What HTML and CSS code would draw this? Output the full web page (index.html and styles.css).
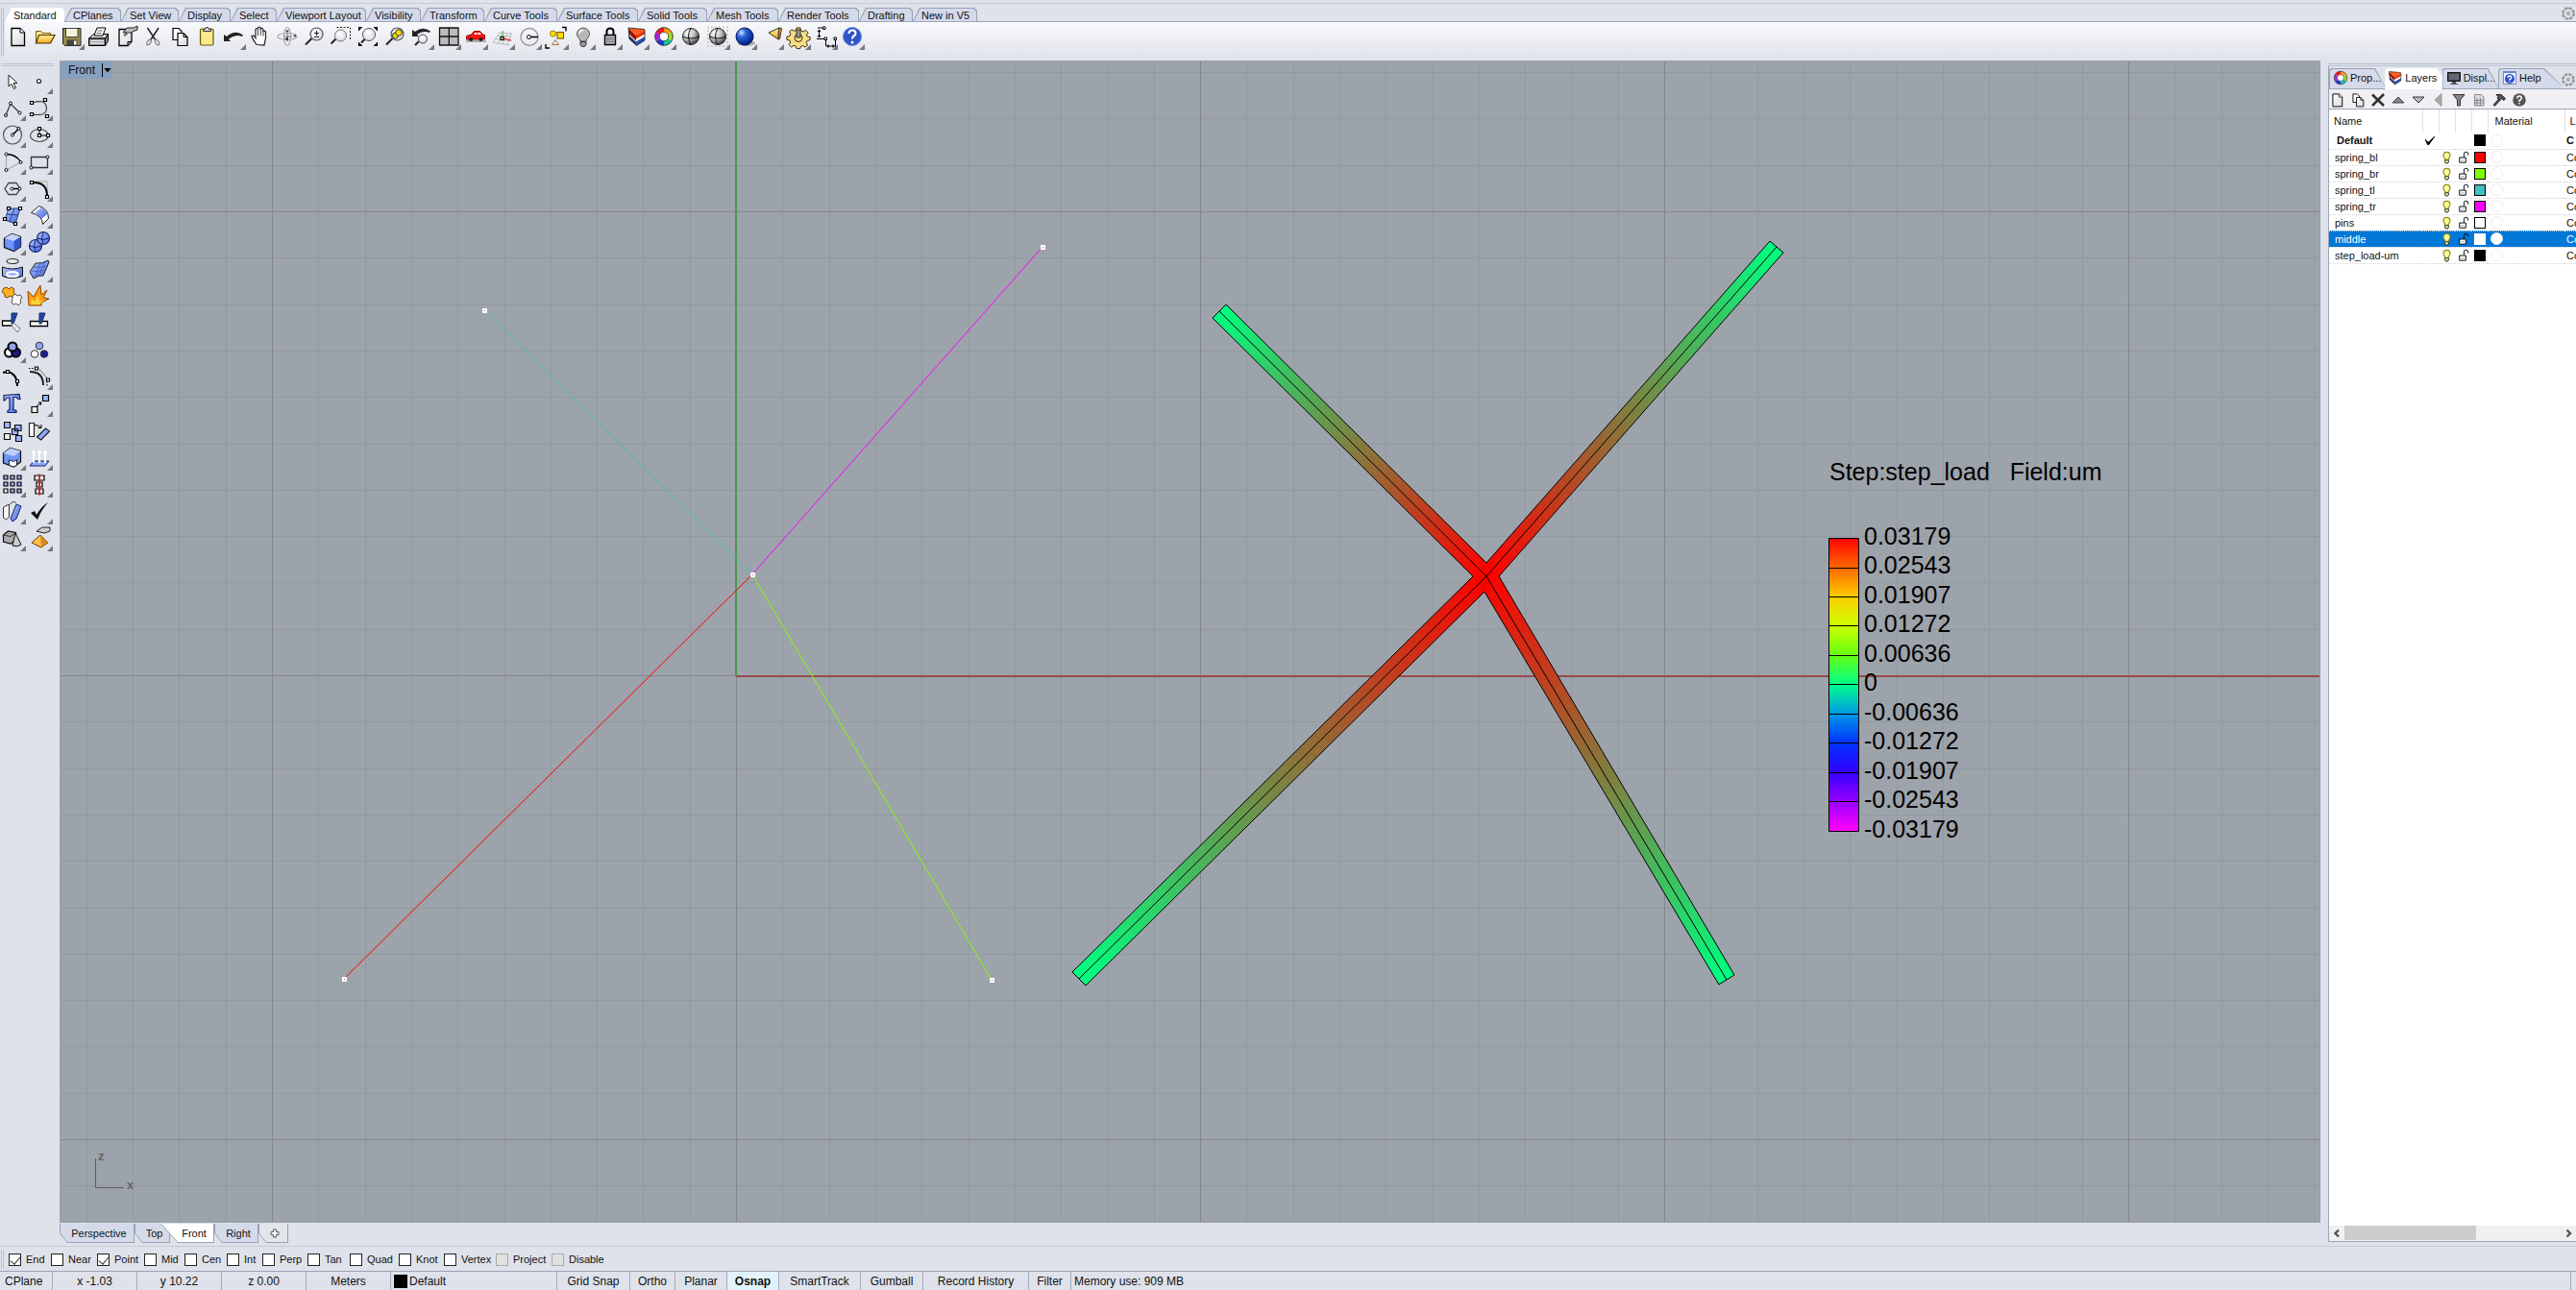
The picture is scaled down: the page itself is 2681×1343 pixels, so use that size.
FILE: index.html
```html
<!DOCTYPE html>
<html lang="en">
<head>
<meta charset="utf-8">
<title>Front viewport</title>
<link rel="stylesheet" href="styles.css">
</head>
<body>
<svg class="defs" aria-hidden="true">
  <defs>
    <linearGradient id="paper" x1="0" y1="0" x2="1" y2="1"><stop offset="0" stop-color="#fff"/><stop offset="1" stop-color="#d8d8d8"/></linearGradient>
    <linearGradient id="blue" x1="0" y1="0" x2="1" y2="1"><stop offset="0" stop-color="#b4c8ff"/><stop offset="1" stop-color="#3f62dd"/></linearGradient>
    <linearGradient id="gold" x1="0" y1="0" x2="0" y2="1"><stop offset="0" stop-color="#fff1a0"/><stop offset="1" stop-color="#f4a91c"/></linearGradient>
    <radialGradient id="grayball" cx=".32" cy=".28" r=".75"><stop offset="0" stop-color="#fff"/><stop offset=".5" stop-color="#c4c4c4"/><stop offset="1" stop-color="#444"/></radialGradient>
    <radialGradient id="blueball" cx=".32" cy=".28" r=".75"><stop offset="0" stop-color="#cfe0ff"/><stop offset=".35" stop-color="#2b63d8"/><stop offset="1" stop-color="#001c80"/></radialGradient>
    <radialGradient id="lens" cx=".4" cy=".35" r=".7"><stop offset="0" stop-color="#fff"/><stop offset="1" stop-color="#d5d8de"/></radialGradient>
    <symbol id="i-doc" viewBox="0 0 28 28"><path d="M7 5.500h9l4.500 4.500v13.500H7z" fill="url(#paper)" stroke="#000" stroke-width="1.300"/><path d="M16 5.500V10h4.500" fill="#fff" stroke="#000"/></symbol>
    <symbol id="i-copy" viewBox="0 0 28 28"><path d="M7 5.500h6l3 3v9H7z" fill="#fff" stroke="#000" stroke-width="1.200"/><path d="M12 10.500h6l4 4v9H12z" fill="url(#paper)" stroke="#000" stroke-width="1.200"/><path d="M18 10.500v4h4" fill="none" stroke="#000"/></symbol>
    <symbol id="i-wheel" viewBox="0 0 28 28"><g fill="none" stroke-width="5"><path d="M14 7a7 7 0 0 1 6 3.500" stroke="#f90"/><path d="M20 10.500a7 7 0 0 1 0 7" stroke="#9d2"/><path d="M20 17.500a7 7 0 0 1-6 3.500" stroke="#1c9"/><path d="M14 21a7 7 0 0 1-6-3.500" stroke="#23d"/><path d="M8 17.500a7 7 0 0 1 0-7" stroke="#a2d"/><path d="M8 10.500A7 7 0 0 1 14 7" stroke="#f12"/></g><circle cx="14" cy="14" r="9.300" fill="none" stroke="#444"/><circle cx="14" cy="14" r="4.700" fill="#fff" stroke="#555"/></symbol>
    <symbol id="i-layers" viewBox="0 0 28 28"><path d="M5 5l8 8 .5 10.500L6 16.500z" fill="#8c1a10"/><path d="M5.600 13l7.600 7 .3 3.500L6 16.500z" fill="#17368c"/><path d="M5.300 11l7.800 7.500.2 1.500L5.600 13z" fill="#ddd"/><path d="M13.300 19L22 14v4l-8.500 5.500z" fill="#2450b4"/><path d="M13 16.500l9-5V14l-8.700 5z" fill="#fff"/><path d="M13 12.500l9-5v4l-9 5z" fill="#e8320c"/><path d="M5 5l16.500 1.500.5 1-9 5.500z" fill="#ff5a1c"/><path d="M5 5l16.500 1.500.5 1V18l-8.500 5.500L6 16.500z" fill="none" stroke="#222" stroke-width=".8"/></symbol>
    <symbol id="i-ball" viewBox="0 0 28 28"><circle cx="14" cy="14" r="8.500" fill="url(#grayball)" stroke="#222"/><path d="M5.500 14q8.500 4 17 0M14 5.500q-5 8.500 0 17" fill="none" stroke="#111"/></symbol>
    <symbol id="i-gear" viewBox="0 0 28 28"><path d="M12 5h4l.6 3 2.400 1 2.600-1.600 2.600 2.800L22.500 12l.6 2 3 .6v3l-3 .8-1 2 1.500 2.600-2.600 2-2.500-1.500-2 .8-.8 2.300h-3.600l-.9-2.500-2-.8L6.500 25l-2.400-2.300L5.700 20l-.8-2-3-.7v-3l3-.8 1-2.200L4.400 9 7 6.800l2.600 1.500 1.800-.7z"/><circle cx="14" cy="15.500" r="4" class="hub"/></symbol>
    <symbol id="i-bulb" viewBox="0 0 17 17"><path d="M8.500 2.500a3.700 3.700 0 0 0-3.700 3.700c0 2 1.700 2.700 1.900 4.800h3.600c.2-2.100 1.900-2.800 1.900-4.800a3.700 3.700 0 0 0-3.700-3.700z" fill="#ffff9c" stroke="#8c8c20" stroke-width="1.200"/><path d="M6.500 11.500h4v2.500h-1v1h-2v-1h-1z" fill="#ff9" stroke="#333"/></symbol>
    <symbol id="i-lock" viewBox="0 0 17 17"><path d="M4.500 8.500h7v5.500h-7z" fill="#fff" stroke="#000"/><path d="M9.500 8V4.500q0-2 1.500-2h1.500q1.500 0 1.500 2V6" fill="none" stroke="#000"/><path d="M6 11.500h4" stroke="#aaa"/></symbol>
    <symbol id="i-mag" viewBox="0 0 28 28"><path d="M5 22.500l7-7" stroke="#222" stroke-width="2"/><circle cx="16.500" cy="11.500" r="6.500" fill="url(#lens)" stroke="#555" stroke-width="1.200"/></symbol>
    <symbol id="i-opts" viewBox="0 0 16 16"><circle cx="8" cy="8" r="6" fill="none" stroke="#888" stroke-width="1.600" stroke-dasharray="3 1.700"/><circle cx="8" cy="8" r="5" fill="none" stroke="#999"/><circle cx="8" cy="8" r="1.500" fill="none" stroke="#888"/></symbol>
    <linearGradient id="scale" x1="0" y1="0" x2="0" y2="1"><stop offset="0" stop-color="#f00"/><stop offset=".1" stop-color="#ff6600"/><stop offset=".2" stop-color="#ffcc00"/><stop offset=".3" stop-color="#ccff00"/><stop offset=".4" stop-color="#66ff10"/><stop offset=".5" stop-color="#00ff88"/><stop offset=".6" stop-color="#0099e5"/><stop offset=".7" stop-color="#0033ff"/><stop offset=".8" stop-color="#3300ff"/><stop offset=".9" stop-color="#9900ff"/><stop offset="1" stop-color="#f0f"/></linearGradient>
  </defs>
</svg>

<header class="top">
  <div class="grip-v"></div>
  <div class="top-main">
    <nav class="tabs" aria-label="Toolbar groups">
      <button class="tab active"><span>Standard</span></button><button class="tab"><span>CPlanes</span></button><button class="tab"><span>Set View</span></button><button class="tab"><span>Display</span></button><button class="tab"><span>Select</span></button><button class="tab"><span>Viewport Layout</span></button><button class="tab"><span>Visibility</span></button><button class="tab"><span>Transform</span></button><button class="tab"><span>Curve Tools</span></button><button class="tab"><span>Surface Tools</span></button><button class="tab"><span>Solid Tools</span></button><button class="tab"><span>Mesh Tools</span></button><button class="tab"><span>Render Tools</span></button><button class="tab"><span>Drafting</span></button><button class="tab"><span>New in V5</span></button>
      <button class="opts" aria-label="Toolbar options"><svg viewBox="0 0 16 16"><use href="#i-opts"/></svg></button>
    </nav>
    <div class="toolbar">
      <button class="tool" aria-label="New"><svg viewBox="0 0 28 28"><use href="#i-doc"/></svg></button>
      <button class="tool" aria-label="Open"><svg viewBox="0 0 28 28"><path d="M4.500 20.500V8.500h5l1.500 2h8.500v3" fill="#ffe98a" stroke="#7a5a00"/><path d="M4.500 21l3-8.500h16.500L19.500 21z" fill="url(#gold)" stroke="#4a3500" stroke-width="1.200"/></svg></button>
      <button class="tool more" aria-label="Save"><svg viewBox="0 0 28 28"><path d="M4.500 5.500h18.500v18H6.500l-2-2z" fill="#958d48" stroke="#222"/><path d="M7.500 5.500h12.500v9H7.500z" fill="#f4f2da" stroke="#444"/><path d="M8.500 17.500h11v6h-11z" fill="#444"/><path d="M16 18.500h2.500v4H16z" fill="#fff"/></svg></button>
      <button class="tool" aria-label="Print"><svg viewBox="0 0 28 28"><path d="M3.500 16l5-4.500h15l-3 4.500z" fill="#ddd" stroke="#000"/><path d="M9 13l3-8h9l-3 8z" fill="#fff" stroke="#000"/><path d="M12.500 8h5M11.500 10.500h5" stroke="#666"/><path d="M3.500 16h17v7.500h-17zM20.500 16l3-4.500v7l-3 5z" fill="#888" stroke="#000"/><path d="M5 18.500h14M5 21h14" stroke="#eee" stroke-width="1.300"/></svg></button>
      <button class="tool" aria-label="Properties"><svg viewBox="0 0 28 28"><path d="M7 6.500h13v13l-4 4H7z" fill="url(#paper)" stroke="#000" stroke-width="1.300"/><path d="M16 23.500v-4h4" fill="#999" stroke="#000"/><path d="M11 10l4-5h7l4-2v4l-4 1.500-3 2-2-1-4 4-1-1 3-3z" fill="#bbb" stroke="#222"/></svg></button>
      <button class="tool" aria-label="Cut"><svg viewBox="0 0 28 28"><path d="M8.500 5l8.500 13M20 5l-8.500 13" stroke="#222" stroke-width="1.500"/><ellipse cx="10" cy="20" rx="1.700" ry="3.200" transform="rotate(35 10 20)" fill="none" stroke="#888" stroke-width="1.300"/><ellipse cx="18.500" cy="20" rx="1.700" ry="3.200" transform="rotate(-35 18.500 20)" fill="none" stroke="#888" stroke-width="1.300"/></svg></button>
      <button class="tool" aria-label="Copy"><svg viewBox="0 0 28 28"><use href="#i-copy"/></svg></button>
      <button class="tool" aria-label="Paste"><svg viewBox="0 0 28 28"><rect x="7.500" y="6" width="13.500" height="17" rx="1.500" fill="#fbe78c" stroke="#6b5500" stroke-width="1.200"/><path d="M10.500 8.500V6.500h2l1-2h2l1 2h2v2z" fill="#ddd" stroke="#333"/></svg></button>
      <button class="tool more" aria-label="Undo"><svg viewBox="0 0 28 28"><path d="M4 12v7h7l-2-2.500q7-5.500 14-2.500l1-1.500q-8-6-17 1.500z" fill="#222"/></svg></button>
      <button class="tool" aria-label="Pan"><svg viewBox="0 0 28 28"><path d="M10 22.500q-4-5-5-9 2-1.500 4 2V6.500q1.500-2 2.500 0V5q1.500-2 2.700 0v1q1.600-1.500 2.600.5v2q1.600-1 2.700.7V16l-1.500 7z" fill="#fff" stroke="#222" stroke-width="1.200"/><path d="M11.500 6.500V13M14.300 6v7M17 8v5.500" stroke="#444"/></svg></button>
      <button class="tool" aria-label="Rotate view"><svg viewBox="0 0 28 28"><ellipse cx="14" cy="14" rx="10" ry="3.500" fill="none" stroke="#aaa" stroke-width="1.200"/><ellipse cx="14" cy="14" rx="3.500" ry="9.500" fill="none" stroke="#aaa" stroke-width="1.200"/><path d="M14 10v9M10 14h9" stroke="#777"/><path d="M14 10l-2-2.500h4zM11 16.500l4-2v4zM20 14l2.500-2.500.5 3z" fill="#333"/></svg></button>
      <button class="tool" aria-label="Zoom"><svg viewBox="0 0 28 28"><use href="#i-mag"/><path d="M14 10.500h5M16.500 8v5M14 14.500h5" stroke="#222" stroke-width="1.200"/></svg></button>
      <button class="tool" aria-label="Zoom window"><svg viewBox="0 0 28 28"><path d="M9.500 4.500h14v12.500" fill="none" stroke="#222" stroke-dasharray="2 1.500"/><path d="M3.500 21.500l5-5" stroke="#222" stroke-width="2"/><circle cx="13.500" cy="13" r="6" fill="url(#lens)" stroke="#777"/></svg></button>
      <button class="tool" aria-label="Zoom extents"><svg viewBox="0 0 28 28"><path d="M4 8.500V4h4.500zM19.500 4H24v4.500zM24 19.500V24h-4.500zM8.500 24H4v-4.500z" fill="#000"/><path d="M7 20.500l4-4" stroke="#222" stroke-width="2"/><circle cx="15" cy="12" r="6.500" fill="url(#lens)" stroke="#555"/></svg></button>
      <button class="tool" aria-label="Zoom selected"><svg viewBox="0 0 28 28"><use href="#i-mag"/><circle cx="14.500" cy="13" r="3" fill="#ffdf00" stroke="#333"/><circle cx="18" cy="10" r="3.300" fill="#ffdf00" stroke="#333"/></svg></button>
      <button class="tool more" aria-label="Undo view change"><svg viewBox="0 0 28 28"><path d="M4 7v7h7l-2-2q6-5 13-2l1-1.500Q15 3 7 9z" fill="#222"/><path d="M7 23l4-4" stroke="#222" stroke-width="2"/><circle cx="15" cy="16.500" r="4.500" fill="url(#lens)" stroke="#444"/></svg></button>
      <button class="tool more" aria-label="Four viewports"><svg viewBox="0 0 28 28"><path d="M4.500 5h19.500v18H4.500z" fill="#bbb" stroke="#111" stroke-width="1.300"/><path d="M14.300 5v18M4.500 14h19.500" stroke="#111" stroke-width="1.300"/></svg></button>
      <button class="tool more" aria-label="Named views"><svg viewBox="0 0 28 28"><path d="M4 19h21" stroke="#aaa" stroke-width="2"/><path d="M4.500 17v-3.500l5-1.500 3-3.500h6l3 3.500 2 .5V17z" fill="#f11" stroke="#900"/><path d="M12 12l1.500-2h2v2zM16.500 10h2l1.500 2h-3.500z" fill="#fff"/><circle cx="9" cy="17" r="2" fill="#222"/><circle cx="19.500" cy="17" r="2" fill="#222"/></svg></button>
      <button class="tool more" aria-label="Set CPlane"><svg viewBox="0 0 28 28"><path d="M4 20l7-10M9 21.500l6-11M14 22.500l5-12M19 23l4-12M11 10l13 1M9 13l14.500 1M6.500 16.500l16.500 2M4 20l17 3" stroke="#bbb" fill="none"/><path d="M14 16V8" stroke="#4a4"/><path d="M14 16l9 2" stroke="#d44" stroke-width="1.500"/><rect x="12" y="14.500" width="3" height="3" fill="#fff" stroke="#000" stroke-width="1.200"/></svg></button>
      <button class="tool more" aria-label="Radius"><svg viewBox="0 0 28 28"><circle cx="14" cy="14.500" r="9" fill="none" stroke="#999" stroke-width="1.400"/><path d="M14 14.500h9" stroke="#000" stroke-width="1.500"/><circle cx="13.500" cy="14.500" r="2" fill="#fff" stroke="#000"/></svg></button>
      <button class="tool more" aria-label="Select"><svg viewBox="0 0 28 28"><circle cx="10.500" cy="11" r="3" fill="#ffdf00" stroke="#a70"/><rect x="15" y="9.500" width="6.500" height="6.500" fill="#ffdf00" stroke="#740"/><path d="M13 17.500l-3.500 5h7z" fill="#eee" stroke="#a74"/><path d="M20 4.500h4v4M3 22v4h4" fill="none" stroke="#000" stroke-width="1.400"/></svg></button>
      <button class="tool more" aria-label="Hide"><svg viewBox="0 0 28 28"><path d="M14 5a6.500 6.500 0 0 0-6.500 6.500c0 3 3 4 3.500 7.500h6c.5-3.500 3.500-4.500 3.500-7.500A6.500 6.500 0 0 0 14 5z" fill="#b8b8b8" stroke="#555"/><path d="M10 11q0-3.500 4-3.500" fill="none" stroke="#fff" stroke-width="1.500"/><path d="M11 19.500h6v3l-1.500 2h-3L11 22.500z" fill="#999" stroke="#333"/></svg></button>
      <button class="tool more" aria-label="Lock"><svg viewBox="0 0 28 28"><path d="M10.500 13V9q0-3.500 3.500-3.500T17.500 9v4" fill="none" stroke="#000" stroke-width="2"/><path d="M8.500 12.500h11v10h-11z" fill="#bbb" stroke="#000" stroke-width="1.400"/><path d="M10 15.500h8M10 17.500h8M10 19.500h8" stroke="#777"/></svg></button>
      <button class="tool more" aria-label="Edit layers"><svg viewBox="0 0 28 28"><use href="#i-layers"/></svg></button>
      <button class="tool more" aria-label="Properties"><svg viewBox="0 0 28 28"><use href="#i-wheel"/></svg></button>
      <button class="tool" aria-label="Shade"><svg viewBox="0 0 28 28"><use href="#i-ball"/></svg></button>
      <button class="tool more" aria-label="Ghosted"><svg viewBox="0 0 28 28"><path d="M3 4.500h23M3 8h23M3 12h23M3 16h23M3 20h23M3 24h23" stroke="#ccc" stroke-width="2" stroke-dasharray="2 2"/><use href="#i-ball"/></svg></button>
      <button class="tool more" aria-label="Render"><svg viewBox="0 0 28 28"><ellipse cx="16" cy="21" rx="9" ry="3" fill="#aaa"/><circle cx="14" cy="14" r="9" fill="url(#blueball)" stroke="#00145c"/></svg></button>
      <button class="tool more" aria-label="Spotlight"><svg viewBox="0 0 28 28"><path d="M11 10l11-5-1 12z" fill="url(#gold)" stroke="#333"/><path d="M21.500 5l3 .5-2 11-1.500.5z" fill="#f80" stroke="#333"/></svg></button>
      <button class="tool more" aria-label="Options"><svg viewBox="0 0 28 28" class="gear"><use href="#i-gear"/><path d="M12 7h4v8h-4z" fill="#999" stroke="#333"/></svg></button>
      <button class="tool more" aria-label="Dimensions"><svg viewBox="0 0 28 28"><path d="M6 5h6M7.500 7v8M5 16.500h9.500V24M24.500 17v9M15.500 24h8" fill="none" stroke="#000"/><path d="M5.500 9l2-2.500 2 2.500zM5.500 13l2 2.500 2-2.500zM17.500 22l-2.500 2 2.500 2zM21.500 22l2.500 2-2.500 2z"/><path d="M11.500 4h2.500v2.500h-2.500zM13 15h2.500v2.500H13zM23 15h2.500v2.500H23z" fill="#fff" stroke="#000"/></svg></button>
      <button class="tool more" aria-label="Help"><svg viewBox="0 0 28 28"><circle cx="14" cy="14" r="9.500" fill="#3154c8" stroke="#6d87d8"/><path d="M10.500 11q0-3.500 3.500-3.500t3.500 3q0 2-2 3-1.500 1-1.500 3" fill="none" stroke="#fff" stroke-width="2.200"/><circle cx="14" cy="20" r="1.500" fill="#fff"/></svg></button>
    </div>
  </div>
</header>

<div class="work">
  <aside class="palette">
    <div class="grip-h"></div>
    <div class="palette-grid">
      <button class="tool" aria-label="Pointer"><svg viewBox="0 0 28 28"><path d="M9 8v12l3-2.500 2.500 5 2-1-2.500-5h4z" fill="#fff" stroke="#222"/></svg></button>
      <button class="tool more" aria-label="Point"><svg viewBox="0 0 28 28"><circle cx="12.500" cy="14.500" r="2" fill="#fff" stroke="#222" stroke-width="1.200"/></svg></button>
      <button class="tool more" aria-label="Polyline"><svg viewBox="0 0 28 28"><path d="M6 22l5-12 9 9" fill="none" stroke="#333" stroke-width="1.200"/><g fill="#fff" stroke="#000"><circle cx="6" cy="22" r="1.500"/><circle cx="11" cy="9.500" r="1.500"/><circle cx="20.500" cy="19.500" r="1.500"/></g></svg></button>
      <button class="tool more" aria-label="Curve"><svg viewBox="0 0 28 28"><path d="M6 9q12-4 14 3t-4 9q-5 1-11 0" fill="none" stroke="#444" stroke-width="1.200"/><path d="M3.500 7.500h3v3h-3zM17.500 4.500h3v3h-3zM3.500 19.500h3v3h-3zM19.500 21.500h3v3h-3z" fill="#fff" stroke="#000" stroke-width="1.200"/></svg></button>
      <button class="tool more" aria-label="Circle"><svg viewBox="0 0 28 28"><circle cx="13" cy="14.500" r="9.500" fill="none" stroke="#555" stroke-width="1.200"/><path d="M13 14.500l6-6" stroke="#000" stroke-width="1.500"/><g fill="#fff" stroke="#000"><circle cx="13" cy="14.500" r="1.500"/><circle cx="19.500" cy="8" r="1.500"/></g></svg></button>
      <button class="tool more" aria-label="Ellipse"><svg viewBox="0 0 28 28"><ellipse cx="13" cy="15" rx="9.500" ry="6.500" fill="none" stroke="#555" stroke-width="1.200"/><path d="M13 15V8M13 15h9" stroke="#000"/><path d="M11.500 6.500h3v3h-3zM11.500 13.500h3v3h-3zM20.500 13.500h3v3h-3z" fill="#fff" stroke="#000" stroke-width="1.200"/></svg></button>
      <button class="tool more" aria-label="Arc"><svg viewBox="0 0 28 28"><path d="M6.500 6.500v17l15-9" fill="none" stroke="#aaa" stroke-width="1.200"/><path d="M6.500 6.500q10 0 15 8" fill="none" stroke="#000" stroke-width="1.500"/><g fill="#fff" stroke="#000"><circle cx="6.500" cy="6.500" r="1.500"/><circle cx="6.500" cy="23" r="1.500"/><circle cx="21.500" cy="15" r="1.500"/></g></svg></button>
      <button class="tool more" aria-label="Rectangle"><svg viewBox="0 0 28 28"><path d="M4.500 9.500H21.500V20.500H4.500z" fill="none" stroke="#333" stroke-width="1.300"/><g fill="#fff" stroke="#000"><circle cx="4.500" cy="20.500" r="1.500"/><circle cx="21.500" cy="9.500" r="1.500"/></g></svg></button>
      <button class="tool more" aria-label="Polygon"><svg viewBox="0 0 28 28"><path d="M9 8.500h8l4 6-4 6H9l-4-6z" fill="none" stroke="#444" stroke-width="1.300"/><path d="M13 14.500h7.500" stroke="#000" stroke-width="1.500"/><g fill="#fff" stroke="#000"><circle cx="12.500" cy="14.500" r="1.500"/><circle cx="20.500" cy="14.500" r="1.500"/></g></svg></button>
      <button class="tool more" aria-label="Fillet"><svg viewBox="0 0 28 28"><path d="M5 7h16v15" fill="none" stroke="#aaa"/><path d="M5 8q16-1 16 14" fill="none" stroke="#000" stroke-width="2"/><path d="M3.500 6.500h3v3h-3zM19.500 21.500h3v3h-3z" fill="#fff" stroke="#000" stroke-width="1.200"/></svg></button>
      <button class="tool more" aria-label="Surface from corners"><svg viewBox="0 0 28 28"><path d="M9 7h12l-5 16-11-4z" fill="url(#blue)" stroke="#26408f"/><path d="M15 7l-5 14M7 13l12 1" stroke="#26408f"/><path d="M7.500 5.500h3v3h-3zM19.500 5.500h3v3h-3zM3.500 16.500h3v3h-3zM14.500 21.500h3v3h-3z" fill="#fff" stroke="#000" stroke-width="1.200"/></svg></button>
      <button class="tool more" aria-label="Loft"><svg viewBox="0 0 28 28"><path d="M4.500 11.500l8-7q10 3 10 13l-6 6q0-9-12-12z" fill="#fff" stroke="#222"/><path d="M8 12l7-6q5 3 6 7l-6 5q-2-4-7-6z" fill="url(#blue)"/></svg></button>
      <button class="tool more" aria-label="Box"><svg viewBox="0 0 28 28"><path d="M4.500 10l8-4.500 9 3v10.500l-7 4.500-10-4z" fill="#6f93ff" stroke="#111" stroke-width="1.300"/><path d="M4.500 10l10 3 7-4.500-9-3z" fill="#c4d2ff"/><path d="M14.500 13v10.500l7-4.500V8.500z" fill="#3355c8"/></svg></button>
      <button class="tool more" aria-label="Boolean union"><svg viewBox="0 0 28 28"><g fill="url(#blue)" stroke="#14236b" stroke-width="1.200"><circle cx="9" cy="18" r="6.500"/><circle cx="17" cy="10" r="6.500"/></g><path d="M3 18q6 3 12 0M9 12q-3 6 0 12M11 10q6 3 12 0M17 4q-3 6 0 12" fill="none" stroke="#14236b"/></svg></button>
      <button class="tool more" aria-label="Extrude"><svg viewBox="0 0 28 28"><ellipse cx="13" cy="6" rx="6" ry="2.500" fill="#eee" stroke="#333" stroke-width="1.200"/><path d="M2.500 12q10 4 21 0v9.500q-11 4-21 0z" fill="url(#blue)" stroke="#111"/><ellipse cx="13" cy="19.500" rx="6" ry="2.500" fill="#9eb4ff" stroke="#fff" stroke-width="2"/></svg></button>
      <button class="tool more" aria-label="Surface tools"><svg viewBox="0 0 28 28"><path d="M3 17l6-9q7 1 13-3l1 2-6 14q-5-1-10 3z" fill="url(#blue)" stroke="#222"/><path d="M7 12q7 1 13-1M5.500 16q6 2 13-1M14 8l-5 14M18 7l-5 14" fill="none" stroke="#4862b8"/></svg></button>
      <button class="tool" aria-label="Join"><svg viewBox="0 0 28 28"><path d="M4 6l3-1 2 2 3-2 3 2-1 3 2 3-3 2-3-1-2 2-3-1v-3l-3-2z" fill="#ffb21c" stroke="#7a4a00"/><path d="M13 14l3-2 2 2 3-1 2 3-2 2 1 3-3 3-2-2-3 1-2-2 1-3z" fill="#fff" stroke="#555"/></svg></button>
      <button class="tool" aria-label="Explode"><svg viewBox="0 0 28 28"><path d="M2 24L1 9l6 6 7-12 1 10 6-5-4 8 6 1-8 4v3z" fill="#ff9c12" stroke="#8a4a00"/><path d="M4 23l1-6 3 3 4-7 1 7 5-2-5 5z" fill="#ffd23c"/></svg></button>
      <button class="tool" aria-label="Trim"><svg viewBox="0 0 28 28"><path d="M2.500 12h11v5h-11z" fill="#fff" stroke="#000" stroke-width="1.300"/><path d="M12 4h6l-4 11h-2z" fill="#234aa5" stroke="#122a66"/><path d="M14 14l7 6-3 4-6-7z" fill="#e4e4ea" stroke="#777"/></svg></button>
      <button class="tool" aria-label="Split"><svg viewBox="0 0 28 28"><path d="M3.500 12.500h18v5h-18z" fill="#fff" stroke="#000" stroke-width="1.300"/><path d="M13 4h6l-4 11h-2z" fill="#234aa5" stroke="#122a66"/></svg></button>
      <button class="tool more" aria-label="Group"><svg viewBox="0 0 28 28"><g stroke="#000" stroke-width="2"><circle cx="9.500" cy="17" r="4.500" fill="#fff"/><circle cx="16.500" cy="17" r="4.500" fill="#1c1c8c"/><circle cx="13" cy="11" r="4.500" fill="#96a2e8"/></g></svg></button>
      <button class="tool" aria-label="Ungroup"><svg viewBox="0 0 28 28"><g stroke="#333"><circle cx="8" cy="18.500" r="3.800" fill="#fff"/><circle cx="18" cy="18.500" r="3.800" fill="#1c1c8c"/><circle cx="13" cy="10" r="3.800" fill="#96a2f0"/></g></svg></button>
      <button class="tool" aria-label="Edit points"><svg viewBox="0 0 28 28"><path d="M3 10q7-2 11 2 4 4 4 12" fill="none" stroke="#000" stroke-width="2"/><path d="M6.500 7.500h3v3h-3zM16.500 17.500h3v3h-3z" fill="#fff" stroke="#000" stroke-width="1.200"/></svg></button>
      <button class="tool more" aria-label="Control points"><svg viewBox="0 0 28 28"><path d="M2 5.500h10l9 10v9" fill="none" stroke="#000" stroke-dasharray="1.500 1.500"/><path d="M3 9q14 0 14 14" fill="none" stroke="#222" stroke-width="2"/><path d="M8.500 4h3v3h-3zM20.500 16h3v3h-3z" fill="#fff" stroke="#000" stroke-width="1.200"/></svg></button>
      <button class="tool" aria-label="Text"><svg viewBox="0 0 28 28"><path d="M4 5.500l16-1 1 5h-2l-2-2h-3v13l3 1v2H8v-2l2-1V8H7l-2 3H4z" fill="url(#blue)" stroke="#14236b" stroke-width="1.200"/></svg></button>
      <button class="tool more" aria-label="Move"><svg viewBox="0 0 28 28"><path d="M5 17.500h6v6H5z" fill="#eee" stroke="#000" stroke-width="1.200"/><path d="M16.500 5.500h6v6h-6z" fill="#9cb4ff" stroke="#000" stroke-width="1.200"/><path d="M10 17l5-4m0 0h-3m3 0l-1 3" fill="none" stroke="#000"/></svg></button>
      <button class="tool" aria-label="Copy objects"><svg viewBox="0 0 28 28"><g fill="#9cb4ff" stroke="#111" stroke-width="1.200"><path d="M4.500 5.500h6v6h-6zM15.500 8.500h6.500v6h-6.500zM12.500 12.500h6v6h-6zM16.500 19.500h6v6h-6z"/><path d="M4.500 17.500h6v6h-6z" fill="#eee"/></g></svg></button>
      <button class="tool" aria-label="Rotate"><svg viewBox="0 0 28 28"><path d="M2.500 6.500h5v14h-5z" fill="#fff" stroke="#222" stroke-width="1.200"/><path d="M10.500 21l9-9 4 3-9 9z" fill="#8ca8ff" stroke="#222" stroke-width="1.200"/><path d="M8 8.500q5 0 7 3m0 0V8m0 3.500h-3.500" fill="none" stroke="#000"/></svg></button>
      <button class="tool more" aria-label="Cage edit"><svg viewBox="0 0 28 28"><path d="M3.500 10l7-5.500 11 3v11.500l-7 5-11-4z" fill="#6f93f0" stroke="#111" stroke-width="1.200"/><path d="M3.500 10l11 3 7-5.500-11-3z" fill="#bccdff"/><path d="M9.500 17l5 1.500 3-2V22l-3 2-5-1.500z" fill="#fff" stroke="#222"/></svg></button>
      <button class="tool more" aria-label="Flow"><svg viewBox="0 0 28 28"><path d="M7 18h16l-4 5H3z" fill="#8ca8ff" stroke="#14236b"/><path d="M7 20V9M13 20V9M19 20V9" stroke="#fff" stroke-width="2"/><path d="M4.500 10L7 6l2.500 4zM10.500 10L13 6l2.500 4zM16.500 10L19 6l2.500 4z" fill="#fff"/></svg></button>
      <button class="tool more" aria-label="Array"><svg viewBox="0 0 28 28"><path d="M4 5h4v4H4zM11 5h4v4h-4zM18 5h4v4h-4zM4 12h4v4H4zM11 12h4v4h-4zM18 12h4v4h-4zM11 19h4v4h-4zM18 19h4v4h-4z" fill="#9cb4ff" stroke="#000" stroke-width="1.200"/><path d="M4 19h4v4H4z" fill="#fff" stroke="#000" stroke-width="1.200"/></svg></button>
      <button class="tool more" aria-label="Align"><svg viewBox="0 0 28 28"><path d="M8 5h10v5H8zM10 12h6v5h-6zM9 19h8v5H9z" fill="#eee" stroke="#000" stroke-width="1.200"/><path d="M13 3.500v22" stroke="#c22" stroke-width="1.800"/></svg></button>
      <button class="tool more" aria-label="Check"><svg viewBox="0 0 28 28"><path d="M3.500 10l6-3v13l-3 3-3-2z" fill="#f4f4f4" stroke="#333"/><path d="M11 22l6-15 5 2-5 13-4 3z" fill="url(#blue)" stroke="#14236b"/><path d="M11 7q2-5 6-1" fill="none" stroke="#444"/></svg></button>
      <button class="tool more" aria-label="Analyze"><svg viewBox="0 0 28 28"><path d="M4 16l4-2 2 4Q15 9 22 5q-7 8-11 18z" fill="#111"/></svg></button>
      <button class="tool more" aria-label="Mesh primitives"><svg viewBox="0 0 28 28"><path d="M3.500 11l5-4 8 1.500v8L11 20l-7.500-2z" fill="#aaa" stroke="#111" stroke-width="1.200"/><path d="M3.500 11l7.500 1.500 5.500-4" fill="none" stroke="#333"/><path d="M16 9l6 12q-4 3-9 1z" fill="#ccc" stroke="#111"/></svg></button>
      <button class="tool more" aria-label="Drag"><svg viewBox="0 0 28 28"><path d="M5 19l9-8 8 8-7 5z" fill="#ffc04a" stroke="#6b3c00"/><path d="M14 11l1 13 7-5z" fill="#d8881c"/><path d="M10 7l6-4h8v4l-6 2z" fill="#ccc" stroke="#222"/></svg></button>
    </div>
  </aside>

  <main class="center">
    <section class="viewport">
      <svg class="scene" role="img" aria-label="Spring model and displacement field">
        <defs>
          <pattern id="grid" x="766" y="220" width="483" height="483" patternUnits="userSpaceOnUse">
            <path fill="#9299a0" d="M48 0h1v483h-1zM97 0h1v483h-1zM145 0h1v483h-1zM193 0h1v483h-1zM242 0h1v483h-1zM290 0h1v483h-1zM338 0h1v483h-1zM386 0h1v483h-1zM435 0h1v483h-1zM0 48h483v1H0zM0 97h483v1H0zM0 145h483v1H0zM0 193h483v1H0zM0 242h483v1H0zM0 290h483v1H0zM0 338h483v1H0zM0 386h483v1H0zM0 435h483v1H0z"/>
            <path fill="#83868e" d="M0 0h1v483H0zM0 0h483v1H0z"/>
          </pattern>
          <linearGradient id="tl" gradientUnits="userSpaceOnUse" x1="1269" y1="324" x2="1547" y2="600"><stop stop-color="#00ff80"/><stop offset="1" stop-color="#f00"/></linearGradient>
          <linearGradient id="tr" gradientUnits="userSpaceOnUse" x1="1849" y1="257" x2="1547" y2="600"><stop stop-color="#00ff80"/><stop offset="1" stop-color="#f00"/></linearGradient>
          <linearGradient id="bl" gradientUnits="userSpaceOnUse" x1="1123" y1="1019" x2="1547" y2="600"><stop stop-color="#00ff80"/><stop offset="1" stop-color="#f00"/></linearGradient>
          <linearGradient id="br" gradientUnits="userSpaceOnUse" x1="1797" y1="1020" x2="1547" y2="600"><stop stop-color="#00ff80"/><stop offset="1" stop-color="#f00"/></linearGradient>
        </defs>
        <g transform="translate(-63 -64)">
          <rect x="63" y="64" width="100%" height="100%" fill="url(#grid)"/>
          <rect x="766" y="703" width="100%" height="2" fill="#964b4b"/>
          <rect x="765" y="64" width="2" height="640" fill="#4b964b"/>
          <g fill="none">
            <path d="M504 323L783 598" stroke="#40c0c0"/>
            <path d="M1085 257L783 598" stroke="#f0f"/>
            <path d="M358 1019L783 598" stroke="#f00"/>
            <path d="M1032 1020L783 598" stroke="#80ff00"/>
          </g>
          <path d="M502 321h5v5h-5zM1083 255h5v5h-5zM356 1017h5v5h-5zM1030 1018h5v5h-5zM781 596h5v5h-5z" fill="#fff"/>
          <path d="M504 323h1v1h-1zM1085 257h1v1h-1zM358 1019h1v1h-1zM1032 1020h1v1h-1zM783 598h1v1h-1z" fill="#889"/>
          <path d="M1276 317L1547 586V600H1533L1262 331z" fill="url(#tl)"/>
          <path d="M1842 251L1547 586V600H1560L1856 263z" fill="url(#tr)"/>
          <path d="M1116 1012L1533 600H1547L1545 616L1130 1026z" fill="url(#bl)"/>
          <path d="M1789 1025L1545 616L1547 600H1560L1805 1015z" fill="url(#br)"/>
          <path d="M1547 587L1559 600L1545 615L1534 600z" fill="#f00"/>
          <path d="M1547 586L1276 317L1262 331L1533 600L1116 1012L1130 1026L1545 616L1789 1025L1805 1015L1560 600L1856 263L1842 251zM1269 324L1547 600L1849 257M1123 1019L1547 600L1797 1020" fill="none" stroke="#000"/>
          <rect x="1903" y="560" width="31" height="305" fill="url(#scale)"/>
          <path d="M1903.500 560.500h31v305h-31zM1903 591.500h31M1903 621.500h31M1903 651.500h31M1903 682.500h31M1903 712.500h31M1903 743.500h31M1903 773.500h31M1903 804.500h31M1903 834.500h31" fill="none" stroke="#000"/>
          <path d="M99.500 1206v30.500H129" fill="none" stroke="#5c5c5c"/>
          <g class="axis-label"><text x="102" y="1208">z</text><text x="132" y="1238">x</text></g>
          <g class="legend">
            <text x="1904" y="500" xml:space="preserve">Step:step_load   Field:um</text>
            <text x="1940" y="567">0.03179</text><text x="1940" y="597">0.02543</text><text x="1940" y="628">0.01907</text><text x="1940" y="658">0.01272</text><text x="1940" y="689">0.00636</text><text x="1940" y="719">0</text><text x="1940" y="750">-0.00636</text><text x="1940" y="780">-0.01272</text><text x="1940" y="811">-0.01907</text><text x="1940" y="841">-0.02543</text><text x="1940" y="872">-0.03179</text>
          </g>
        </g>
      </svg>
      <button class="view-title"><span>Front</span><i></i></button>
    </section>
    <nav class="view-tabs" aria-label="Viewports">
      <button class="vtab"><span>Perspective</span></button><button class="vtab"><span>Top</span></button><button class="vtab active"><span>Front</span></button><button class="vtab"><span>Right</span></button><button class="vtab add" aria-label="New viewport"><span><svg viewBox="0 0 10 10"><path d="M3.500 1h3v2.500H9v3H6.500V9h-3V6.500H1v-3h2.500z" fill="#fff" stroke="#555"/></svg></span></button>
    </nav>
  </main>

  <aside class="panel">
    <div class="grip-h"></div>
    <nav class="panel-tabs" aria-label="Panels">
      <button class="ptab"><span><svg viewBox="3 3 22 22"><use href="#i-wheel" width="28" height="28"/></svg>Prop...</span></button><button class="ptab active"><span><svg viewBox="3 3 22 22"><use href="#i-layers" width="28" height="28"/></svg>Layers</span></button><button class="ptab"><span><svg viewBox="0 0 16 16"><path d="M1.500 2.500h13v9h-13z" fill="#444" stroke="#111"/><path d="M3 4h10v6H3z" fill="#667"/><path d="M6 12h4v2h2v1H4v-1h2z" fill="#555"/></svg>Displ...</span></button><button class="ptab"><span><svg viewBox="0 0 16 16"><path d="M1.500 1.500h13v13h-13z" fill="#eef" stroke="#88a"/><path d="M1 1h14v2H1z" fill="#68c"/><circle cx="8" cy="9" r="5" fill="#2b55d0"/><path d="M6.200 8q0-2 1.800-2t1.800 1.500Q9.800 9 8 9.500v1M8 11.500v1" fill="none" stroke="#fff" stroke-width="1.300"/></svg>Help</span></button>
      <button class="opts" aria-label="Panel options"><svg viewBox="0 0 16 16"><use href="#i-opts"/></svg></button>
    </nav>
    <div class="panel-tools">
      <button aria-label="New layer"><svg viewBox="3 3 22 22"><use href="#i-doc" width="28" height="28"/></svg></button>
      <button aria-label="New sublayer"><svg viewBox="3 3 22 22"><use href="#i-copy" width="28" height="28"/></svg></button>
      <button aria-label="Delete"><svg viewBox="0 0 16 16"><path d="M2 2.500l12 11.500M14 2L2 14" stroke="#333" stroke-width="2.600"/></svg></button>
      <button aria-label="Move up"><svg viewBox="0 0 16 16"><path d="M2 11L8 5l6 6z" fill="#888" stroke="#444"/></svg></button>
      <button aria-label="Move down"><svg viewBox="0 0 16 16"><path d="M2 5l6 6 6-6z" fill="#bbb" stroke="#333"/></svg></button>
      <button aria-label="Move out"><svg viewBox="0 0 16 16"><path d="M4 8l7-6.500v13z" fill="#aaa" stroke="#999"/></svg></button>
      <button aria-label="Filter"><svg viewBox="0 0 16 16"><path d="M2 2.500h12L9.500 8v6h-3V8z" fill="#888" stroke="#333"/></svg></button>
      <button aria-label="Columns"><svg viewBox="0 0 16 16"><path d="M3.500 2.500h7l2.500 2.500v9H3.500zM6 6v8M9.500 6v8M3.500 8.500H13M3.500 11H13" fill="#ddd" stroke="#888"/></svg></button>
      <button aria-label="Tools"><svg viewBox="0 0 16 16"><path d="M2.500 14L9 7" stroke="#444" stroke-width="2.600"/><path d="M5 2.500h5l4.500 4-1.500 2-3-2-2 1.500-2-2 1-1.500z" fill="#555" stroke="#222"/></svg></button>
      <button aria-label="Layer help"><svg viewBox="0 0 16 16"><circle cx="8" cy="8" r="6.800" fill="#555"/><path d="M5.800 6.500q0-2.500 2.200-2.500t2.200 2Q10.200 8 8 8.500v1.500M8 11v1.600" fill="none" stroke="#fff" stroke-width="1.500"/></svg></button>
    </div>
    <div class="layers-wrap">
      <table class="layers">
        <colgroup><col class="c-name"><col class="c-ico"><col class="c-ico"><col class="c-ico"><col class="c-ico"><col class="c-mat"><col></colgroup>
        <thead><tr><th>Name</th><th></th><th></th><th></th><th></th><th>Material</th><th>L</th></tr></thead>
        <tbody>
          <tr class="current"><td>Default</td><td><svg viewBox="0 0 17 17"><path d="M3 8l3 3 7-6.500-6.500 9h-1z" fill="#000" stroke="#000"/></svg></td><td></td><td></td><td><i class="sw black"></i></td><td><i class="mat"></i></td><td>C</td></tr>
          <tr><td>spring_bl</td><td></td><td><svg><use href="#i-bulb"/></svg></td><td><svg><use href="#i-lock"/></svg></td><td><i class="sw red"></i></td><td><i class="mat"></i></td><td>Co</td></tr>
          <tr><td>spring_br</td><td></td><td><svg><use href="#i-bulb"/></svg></td><td><svg><use href="#i-lock"/></svg></td><td><i class="sw lime"></i></td><td><i class="mat"></i></td><td>Co</td></tr>
          <tr><td>spring_tl</td><td></td><td><svg><use href="#i-bulb"/></svg></td><td><svg><use href="#i-lock"/></svg></td><td><i class="sw teal"></i></td><td><i class="mat"></i></td><td>Co</td></tr>
          <tr><td>spring_tr</td><td></td><td><svg><use href="#i-bulb"/></svg></td><td><svg><use href="#i-lock"/></svg></td><td><i class="sw magenta"></i></td><td><i class="mat"></i></td><td>Co</td></tr>
          <tr><td>pins</td><td></td><td><svg><use href="#i-bulb"/></svg></td><td><svg><use href="#i-lock"/></svg></td><td><i class="sw"></i></td><td><i class="mat"></i></td><td>Co</td></tr>
          <tr class="selected"><td>middle</td><td></td><td><svg><use href="#i-bulb"/></svg></td><td><svg><use href="#i-lock"/></svg></td><td><i class="sw"></i></td><td><i class="mat"></i></td><td>Co</td></tr>
          <tr><td>step_load-um</td><td></td><td><svg><use href="#i-bulb"/></svg></td><td><svg><use href="#i-lock"/></svg></td><td><i class="sw black"></i></td><td><i class="mat"></i></td><td>Co</td></tr>
        </tbody>
      </table>
    </div>
    <div class="hscroll">
      <button aria-label="Scroll left"><svg viewBox="0 0 16 16"><path d="M10 4.500L6.500 8l3.500 3.500" fill="none" stroke="#555" stroke-width="2.400"/></svg></button>
      <div class="track"><div class="thumb"></div></div>
      <button aria-label="Scroll right"><svg viewBox="0 0 16 16"><path d="M6.500 4.500L10 8l-3.500 3.500" fill="none" stroke="#555" stroke-width="2.400"/></svg></button>
    </div>
  </aside>
</div>

<form class="osnap">
  <div class="grip-v"></div>
  <div class="snaps">
    <label><input type="checkbox" checked>End</label><label><input type="checkbox">Near</label><label><input type="checkbox" checked>Point</label><label><input type="checkbox">Mid</label><label><input type="checkbox">Cen</label><label><input type="checkbox">Int</label><label><input type="checkbox">Perp</label><label><input type="checkbox">Tan</label><label><input type="checkbox">Quad</label><label><input type="checkbox">Knot</label><label><input type="checkbox">Vertex</label><label><input type="checkbox" disabled>Project</label><label><input type="checkbox" disabled>Disable</label>
  </div>
</form>

<footer class="status">
  <button>CPlane</button><span>x -1.03</span><span>y 10.22</span><span>z 0.00</span><button>Meters</button><button class="layer"><i></i>Default</button><button>Grid Snap</button><button>Ortho</button><button>Planar</button><button class="on">Osnap</button><button>SmartTrack</button><button>Gumball</button><button>Record History</button><button>Filter</button><span class="memory">Memory use: 909 MB</span>
</footer>
</body>
</html>
```
FILE: styles.css
```css
* { box-sizing: border-box; }
body {
  margin: 0;
  height: 100vh;
  display: flex;
  flex-direction: column;
  overflow: hidden;
  background: #dfe2ea;
  color: #111;
  font: 11px/14px "Liberation Sans", Arial, sans-serif;
}
button { font: inherit; color: inherit; background: none; border: 0; padding: 0; margin: 0; }
svg { display: block; }
.defs { position: absolute; width: 0; height: 0; }

.grip-v { width: 3px; flex: none; border: solid #bcc3d0; border-width: 0 1px; margin-left: 1px; }
.grip-h { height: 3px; flex: none; border: solid #bcc3d0; border-width: 1px 0; }
.opts { width: 16px; height: 16px; }

/* Top toolbar */
.top { display: flex; flex: none; height: 60px; margin-top: 3px; border-top: 1px solid #c6cad4; padding-top: 4px; }
.top .grip-v { height: 50px; }
.top-main { flex: 1; min-width: 0; margin-left: 1px; }
.tabs {
  display: grid;
  grid-template-columns: 62px 59px 60px 54px 48px 93px 57px 66px 76px 84px 72px 74px 84px 56px 67px 1fr;
  height: 15px;
  border-bottom: 1px solid #9ca6b8;
}
.tab { height: 14px; background: #98a1b4; clip-path: polygon(0 100%, 7px 0, calc(100% - 3px) 0, 100% 3px, 100% 100%); }
.tab span { display: block; height: 14px; padding: 1px 0 0 9px; text-align: left; white-space: nowrap; background: #d5daea; clip-path: polygon(1px 100%, 8px 1px, calc(100% - 4px) 1px, calc(100% - 1px) 4px, calc(100% - 1px) 100%); }
.tab.active, .tab.active span { background: #fff; height: 15px; }
.tabs .opts { justify-self: end; margin-top: -2px; }
.toolbar { display: flex; height: 40px; padding-top: 1px; background: linear-gradient(#f8f9fb, #dfe2ea); }
.tool { position: relative; width: 28px; height: 28px; flex: none; }
.tool svg { width: 28px; height: 28px; }
.tool.more::after { content: ""; position: absolute; left: 21px; top: 22px; width: 6px; height: 6px; background: #777; clip-path: polygon(100% 0, 100% 100%, 0 100%); }
.gear { fill: #f5df8a; stroke: #3c2c00; stroke-width: 1; }
.gear .hub { fill: #fff; }

/* Work area */
.work { display: flex; flex: 1; min-height: 0; }
.palette { width: 62px; flex: none; padding-top: 3px; }
.palette .grip-h { width: 55px; margin-left: 1px; }
.palette-grid { display: grid; grid-template-columns: 28px 28px; margin-top: 1px; }

.center { flex: 1; min-width: 0; display: flex; flex-direction: column; }
.viewport { position: relative; flex: 1; min-height: 0; border: 1px solid #98a1b0; background: #9da3aa; overflow: hidden; }
.scene { width: 100%; height: 100%; }
.legend { font-size: 25px; fill: #000; }
.axis-label { font-size: 13px; font-weight: bold; fill: #666; }
.view-title { position: absolute; left: 0; top: 0; display: flex; align-items: center; width: 54px; height: 18px; padding-left: 8px; background: #86a0bf; font-size: 12px; }
.view-title span { width: 36px; text-align: left; border-right: 1px solid #000; }
.view-title i { width: 8px; height: 5px; margin-left: 1px; background: #000; clip-path: polygon(0 0, 100% 0, 50% 100%); }

.view-tabs { display: flex; flex: none; height: 24px; padding-top: 1px; }
.vtab { height: 20px; background: #98a1b4; clip-path: polygon(0 0, 100% 0, 100% 100%, 8px 100%, 0 50%); }
.vtab span { display: block; height: 20px; padding: 3px 6px 0 10px; background: #d5daea; clip-path: polygon(1px 0, calc(100% - 1px) 0, calc(100% - 1px) calc(100% - 1px), 8px calc(100% - 1px), 1px 50%); }
.vtab:nth-child(1) { width: 78px; }
.vtab:nth-child(2) { width: 37px; }
.vtab.active { width: 56px; margin-left: -10px; clip-path: polygon(0 0, 100% 0, 100% 100%, 18px 100%); }
.vtab.active span { padding-left: 20px; background: #fff; clip-path: polygon(1px 0, calc(100% - 1px) 0, calc(100% - 1px) calc(100% - 1px), 18px calc(100% - 1px)); }
.vtab:nth-child(4) { width: 46px; }
.vtab.add { width: 31px; }
.vtab.add span { background: #e3e5ec; padding-top: 5px; }
.vtab svg { width: 10px; height: 10px; margin-left: 2px; }

/* Layers panel */
.panel { width: 258px; flex: none; margin-left: 8px; padding-top: 3px; display: flex; flex-direction: column; margin-bottom: 4px; }
.panel-tabs { display: flex; height: 24px; padding-top: 2px; border-bottom: 1px solid #9ca6b8; border-left: 1px solid #9ca6b8; }
.ptab { width: 59px; height: 21px; background: #98a1b4; clip-path: polygon(0 2px, 2px 0, 48px 0, 100% 90%, 100% 100%, 0 100%); }
.ptab span { display: flex; align-items: center; gap: 2px; height: 21px; padding: 0 0 2px 4px; background: #d5daea; white-space: nowrap; clip-path: polygon(1px 3px, 3px 1px, 47px 1px, 58px 90%, 58px 100%, 1px 100%); }
.ptab svg { width: 16px; height: 16px; flex: none; }
.ptab.active { width: 60px; height: 22px; background: #fff; clip-path: polygon(0 2px, 2px 0, 54px 0, 100% 40%, 100% 100%, 0 100%); }
.ptab.active span { height: 22px; padding-left: 3px; background: #fff; clip-path: none; }
.ptab:nth-child(4) { width: 68px; }
.ptab:nth-child(4) span { clip-path: polygon(1px 3px, 3px 1px, 47px 1px, 67px 90%, 67px 100%, 1px 100%); }
.panel-tabs .opts { margin: 4px 0 0 -2px; }
.panel-tools { display: flex; gap: 5px; height: 21px; padding: 1px 0 0 1px; background: #f0f0f4; border-left: 1px solid #9ca6b8; border-bottom: 1px solid #9ca6b8; }
.panel-tools svg { width: 16px; height: 16px; }
.layers-wrap { flex: 1; min-height: 0; overflow: hidden; background: #fff; border-left: 1px solid #9ca6b8; }
.layers { width: 100%; table-layout: fixed; border-collapse: collapse; }
.c-name { width: 97px; }
.c-ico { width: 17px; }
.c-mat { width: 80px; }
.layers th { height: 24px; padding: 0 0 0 5px; text-align: left; font-weight: normal; border-right: 1px solid #e2e2e2; }
.layers th:nth-child(6) { padding-left: 7px; }
.layers th:last-child { border-right: 0; }
.layers td { height: 17px; padding: 0; border-bottom: 1px dotted #d4d4d4; white-space: nowrap; line-height: 14px; }
.layers td:first-child { padding-left: 6px; }
.layers td:last-child { padding-left: 2px; }
.layers td svg { width: 17px; height: 16px; }
.layers .current { font-weight: bold; }
.layers .current td:first-child { padding-left: 8px; }
.layers .selected { background: #0078d7; color: #fff; }
.sw { display: block; width: 12px; height: 12px; margin-left: 3px; border: 1px solid #000; background: #fff; }
.sw.black { background: #000; }
.sw.red { background: #f00; }
.sw.lime { background: #80ff00; }
.sw.teal { background: #40c0c0; }
.sw.magenta { background: #f0f; }
.mat { display: block; width: 13px; height: 13px; margin-left: 3px; border: 1px solid #ececec; border-radius: 50%; }
.selected .sw { border-color: #fff; }
.selected .mat { background: #fff; }
.hscroll { display: flex; height: 17px; flex: none; background: #f0f0f0; border-left: 1px solid #9ca6b8; border-bottom: 1px solid #9ca6b8; }
.hscroll button { width: 16px; height: 16px; }
.hscroll svg { width: 16px; height: 16px; }
.track { flex: 1; }
.thumb { width: 61%; height: 15px; background: #cdcdcd; }

/* Object snaps */
.osnap { display: flex; flex: none; height: 26px; border-top: 1px solid #c6cad4; padding-top: 3px; margin: 0; }
.osnap .grip-v { height: 20px; }
.snaps { display: grid; grid-template-columns: 44px 48px 49px 42px 44px 37px 47px 44px 51px 47px 54px 58px 70px; margin-left: 5px; }
.snaps label { display: flex; align-items: center; gap: 5px; height: 20px; }
.snaps input { appearance: none; position: relative; width: 13px; height: 13px; margin: 0; border: 1px solid #222; background: #fff; flex: none; }
.snaps input:checked::after { content: ""; position: absolute; left: 3px; top: 0; width: 5px; height: 9px; border: solid #333; border-width: 0 1px 1px 0; transform: rotate(40deg); }
.snaps input:disabled { border-color: #aaa; background: #e1e1e1; }

/* Status bar */
.status { display: grid; grid-template-columns: 55px 88px 88px 88px 88px 173px 76px 47px 54px 54px 85px 65px 110px 44px 1fr; flex: none; height: 20px; border-top: 1px solid #9ca3b5; padding-right: 5px; font-size: 12px; }
.status > * { display: flex; align-items: center; justify-content: center; border-right: 1px solid #a3abba; white-space: nowrap; }
.status > :first-child { justify-content: flex-start; padding-left: 5px; }
.status .on { background: #e2f2fc; font-weight: bold; }
.status .layer { justify-content: flex-start; gap: 2px; padding-left: 3px; }
.status .layer i { width: 14px; height: 14px; background: #000; }
.status .memory { justify-content: flex-start; padding-left: 3px; }
```
